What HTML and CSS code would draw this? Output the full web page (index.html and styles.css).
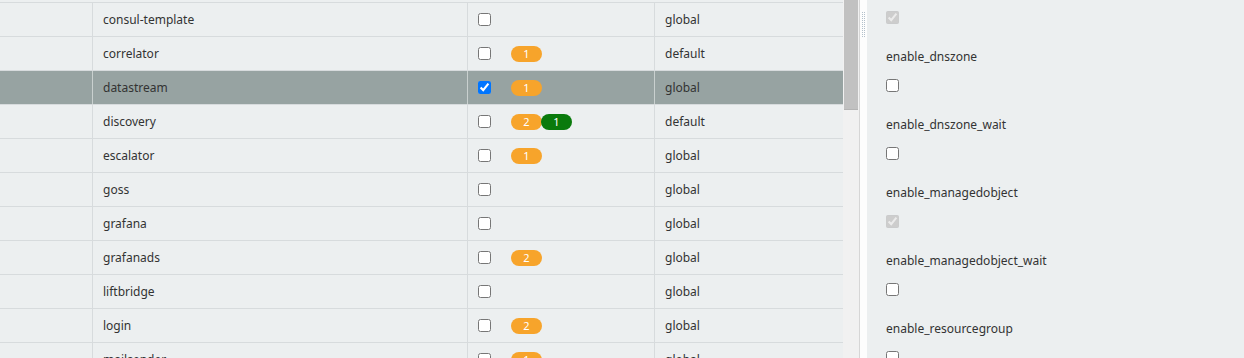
FILE: index.html
```html
<!DOCTYPE html>
<html>
<head>
<meta charset="utf-8">
<link rel="stylesheet" href="styles.css">
</head>
<body>
<div class="layout">
  <div class="grid-area">
    <div class="table">
      <div class="row"><div class="c c1"></div><div class="c c2">consul-template</div><div class="c c3"><input type="checkbox"></div><div class="c c4">global</div></div>
      <div class="row"><div class="c c1"></div><div class="c c2">correlator</div><div class="c c3"><input type="checkbox"><span class="badges"><span class="badge warn">1</span></span></div><div class="c c4">default</div></div>
      <div class="row sel"><div class="c c1"></div><div class="c c2">datastream</div><div class="c c3"><input type="checkbox" checked><span class="badges"><span class="badge warn">1</span></span></div><div class="c c4">global</div></div>
      <div class="row"><div class="c c1"></div><div class="c c2">discovery</div><div class="c c3"><input type="checkbox"><span class="badges"><span class="badge warn">2</span><span class="badge ok">1</span></span></div><div class="c c4">default</div></div>
      <div class="row"><div class="c c1"></div><div class="c c2">escalator</div><div class="c c3"><input type="checkbox"><span class="badges"><span class="badge warn">1</span></span></div><div class="c c4">global</div></div>
      <div class="row"><div class="c c1"></div><div class="c c2">goss</div><div class="c c3"><input type="checkbox"></div><div class="c c4">global</div></div>
      <div class="row"><div class="c c1"></div><div class="c c2">grafana</div><div class="c c3"><input type="checkbox"></div><div class="c c4">global</div></div>
      <div class="row"><div class="c c1"></div><div class="c c2">grafanads</div><div class="c c3"><input type="checkbox"><span class="badges"><span class="badge warn">2</span></span></div><div class="c c4">global</div></div>
      <div class="row"><div class="c c1"></div><div class="c c2">liftbridge</div><div class="c c3"><input type="checkbox"></div><div class="c c4">global</div></div>
      <div class="row"><div class="c c1"></div><div class="c c2">login</div><div class="c c3"><input type="checkbox"><span class="badges"><span class="badge warn">2</span></span></div><div class="c c4">global</div></div>
      <div class="row"><div class="c c1"></div><div class="c c2">mailsender</div><div class="c c3"><input type="checkbox"><span class="badges"><span class="badge warn">1</span></span></div><div class="c c4">global</div></div>
    </div>
    <div class="scrollbar"><div class="thumb"></div></div>
  </div>
  <div class="splitter"><div class="handle"></div></div>
  <div class="panel">
    <div class="field first"><input type="checkbox" checked disabled></div>
    <div class="field"><div class="label">enable_dnszone</div><input type="checkbox"></div>
    <div class="field"><div class="label">enable_dnszone_wait</div><input type="checkbox"></div>
    <div class="field"><div class="label">enable_managedobject</div><input type="checkbox" checked disabled></div>
    <div class="field"><div class="label">enable_managedobject_wait</div><input type="checkbox"></div>
    <div class="field"><div class="label">enable_resourcegroup</div><input type="checkbox"></div>
  </div>
</div>
</body>
</html>
```

FILE: styles.css
```css
html, body {
  margin: 0;
  padding: 0;
  background: #eceff0;
  font-family: "Noto Sans", "Open Sans", sans-serif;
  font-size: 12px;
  color: #333;
  overflow: hidden;
  height: 358px;
}
.layout {
  display: flex;
  height: 358px;
}
.grid-area {
  display: flex;
  width: 859px;
  flex: none;
  border-right: 1px solid #d6d6d6;
}
.table {
  width: 843px;
  flex: none;
  padding-top: 2px;
}
.row {
  display: flex;
  height: 33px;
  border-top: 1px solid #d7dbdd;
  background: #eceff0;
}
.row.sel {
  background: #97a3a2;
}
.c {
  display: flex;
  align-items: center;
  box-sizing: border-box;
  padding-left: 10px;
  border-left: 1px solid #d7dbdd;
}
.row.sel .c { border-left-color: #c9d0cf; }
.c1 { width: 92px; border-left: none; }
.c2 { width: 375px; }
.c3 { width: 187px; }
.c4 { flex: 1; }
.c input {
  margin: 0;
  width: 13px;
  height: 13px;
}
.badges {
  display: flex;
  margin-left: 20px;
}
.badge {
  display: inline-flex;
  align-items: center;
  justify-content: center;
  width: 31px;
  height: 16px;
  border-radius: 8px;
  color: #fff;
  font-size: 11px;
  line-height: 16px;
}
.badge.warn { background: #f7a42b; }
.badge.ok { background: #0a7a0c; margin-left: -1px; }
.scrollbar {
  width: 16px;
  flex: none;
  background: #f1f1f1;
  padding: 0 1px;
  box-sizing: border-box;
}
.thumb {
  height: 110px;
  background: #c1c1c1;
  border-bottom: 1px solid #b4b4b4;
  box-sizing: border-box;
}
.splitter {
  width: 7px;
  flex: none;
  background: #fdfdfd;
  position: relative;
}
.handle {
  position: absolute;
  left: 2px;
  top: 12px;
  width: 4px;
  height: 25px;
  background-image: radial-gradient(circle at 0.5px 0.5px, #b3c0ca 0.6px, transparent 0.7px);
  background-size: 2px 2px;
}
.panel {
  flex: 1;
  background: #eceff0;
  padding-left: 19px;
  padding-top: 11px;
}
.field input {
  display: block;
  margin: 0;
  width: 13px;
  height: 13px;
}
.label {
  margin-top: 25px;
  margin-bottom: 14px;
  line-height: 16px;
}
```
